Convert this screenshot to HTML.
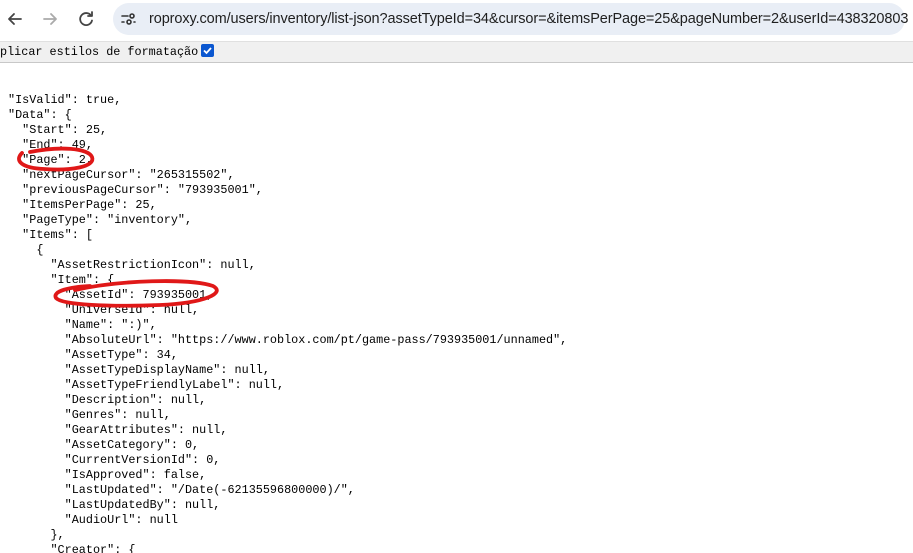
<!DOCTYPE html>
<html><head><meta charset="utf-8"><style>
html,body{margin:0;padding:0;background:#fff;width:913px;height:553px;overflow:hidden;position:relative}
.bar{position:absolute;left:0;top:0;width:913px;height:40px;background:#fff}
.url{position:absolute;left:113px;top:3px;width:792px;height:32px;border-radius:16px;background:#e9eef6;font-family:"Liberation Sans",sans-serif;font-size:14.5px;color:#1f1f1f;line-height:32px}
.url span{position:absolute;left:36px;top:0;white-space:nowrap;letter-spacing:-0.1px}
.strip{position:absolute;left:0;top:41px;width:913px;height:20px;background:#f0f0f0;border-top:1px solid #e0e0e0;border-bottom:1px solid #c8c8c8;font-family:"Liberation Mono",monospace;font-size:11.8px;line-height:20px;color:#000}
.cb{display:inline-block;width:13px;height:13px;background:#0b57d0;border-radius:2px;vertical-align:-2px;margin-left:3px;position:relative}
pre{position:absolute;left:8px;top:93px;margin:0;font-family:"Liberation Mono",monospace;font-size:11.8px;line-height:15px;color:#000}
svg{position:absolute;left:0;top:0}
</style></head><body>
<div class="bar">
<svg width="110" height="40" viewBox="0 0 110 40">
<g fill="none" stroke="#444" stroke-width="1.8" stroke-linecap="round" stroke-linejoin="round">
<path d="M21 19h-12M14 14l-5 5 5 5"/>
<path d="M44 19h12M51 14l5 5-5 5" stroke="#aaa"/>
<path d="M91 15.5a6 6 0 1 0 1 5"/><path d="M92 12v4h-4"/>
</g></svg>
<div class="url">
<svg width="30" height="32" viewBox="0 0 30 32" style="left:0"><g stroke="#333" stroke-width="1.6" fill="none" stroke-linecap="round"><path d="M9 13h6M9 19h2"/><circle cx="19" cy="13" r="2"/><circle cx="16" cy="19" r="2"/><path d="M21 19h1"/></g></svg>
<span>roproxy.com/users/inventory/list-json?assetTypeId=34&amp;cursor=&amp;itemsPerPage=25&amp;pageNumber=2&amp;userId=438320803</span></div>
</div>
<div class="strip">plicar estilos de formatação<span class="cb"><svg width="13" height="13" viewBox="0 0 13 13"><path d="M3 6.5l2.5 2.5 4.5-5" stroke="#fff" stroke-width="1.8" fill="none"/></svg></span></div>
<pre>"IsValid": true,
"Data": {
  "Start": 25,
  "End": 49,
  "Page": 2,
  "nextPageCursor": "265315502",
  "previousPageCursor": "793935001",
  "ItemsPerPage": 25,
  "PageType": "inventory",
  "Items": [
    {
      "AssetRestrictionIcon": null,
      "Item": {
        "AssetId": 793935001,
        "UniverseId": null,
        "Name": ":)",
        "AbsoluteUrl": "https://www.roblox.com/pt/game-pass/793935001/unnamed",
        "AssetType": 34,
        "AssetTypeDisplayName": null,
        "AssetTypeFriendlyLabel": null,
        "Description": null,
        "Genres": null,
        "GearAttributes": null,
        "AssetCategory": 0,
        "CurrentVersionId": 0,
        "IsApproved": false,
        "LastUpdated": "/Date(-62135596800000)/",
        "LastUpdatedBy": null,
        "AudioUrl": null
      },
      "Creator": {</pre>
<svg width="913" height="553" style="pointer-events:none">
<g fill="none" stroke="#e01818" stroke-width="3.8" stroke-linecap="round">
<path d="M30 152 C60 146 88 148 92 157 C96 167 70 171 44 169 C22 168 14 161 22 153"/>
<path d="M75 290 C120 280 190 278 213 286 C226 293 205 303 160 305 C110 307 62 305 56 298 C52 291 70 287 90 286"/>
</g></svg>
</body></html>
